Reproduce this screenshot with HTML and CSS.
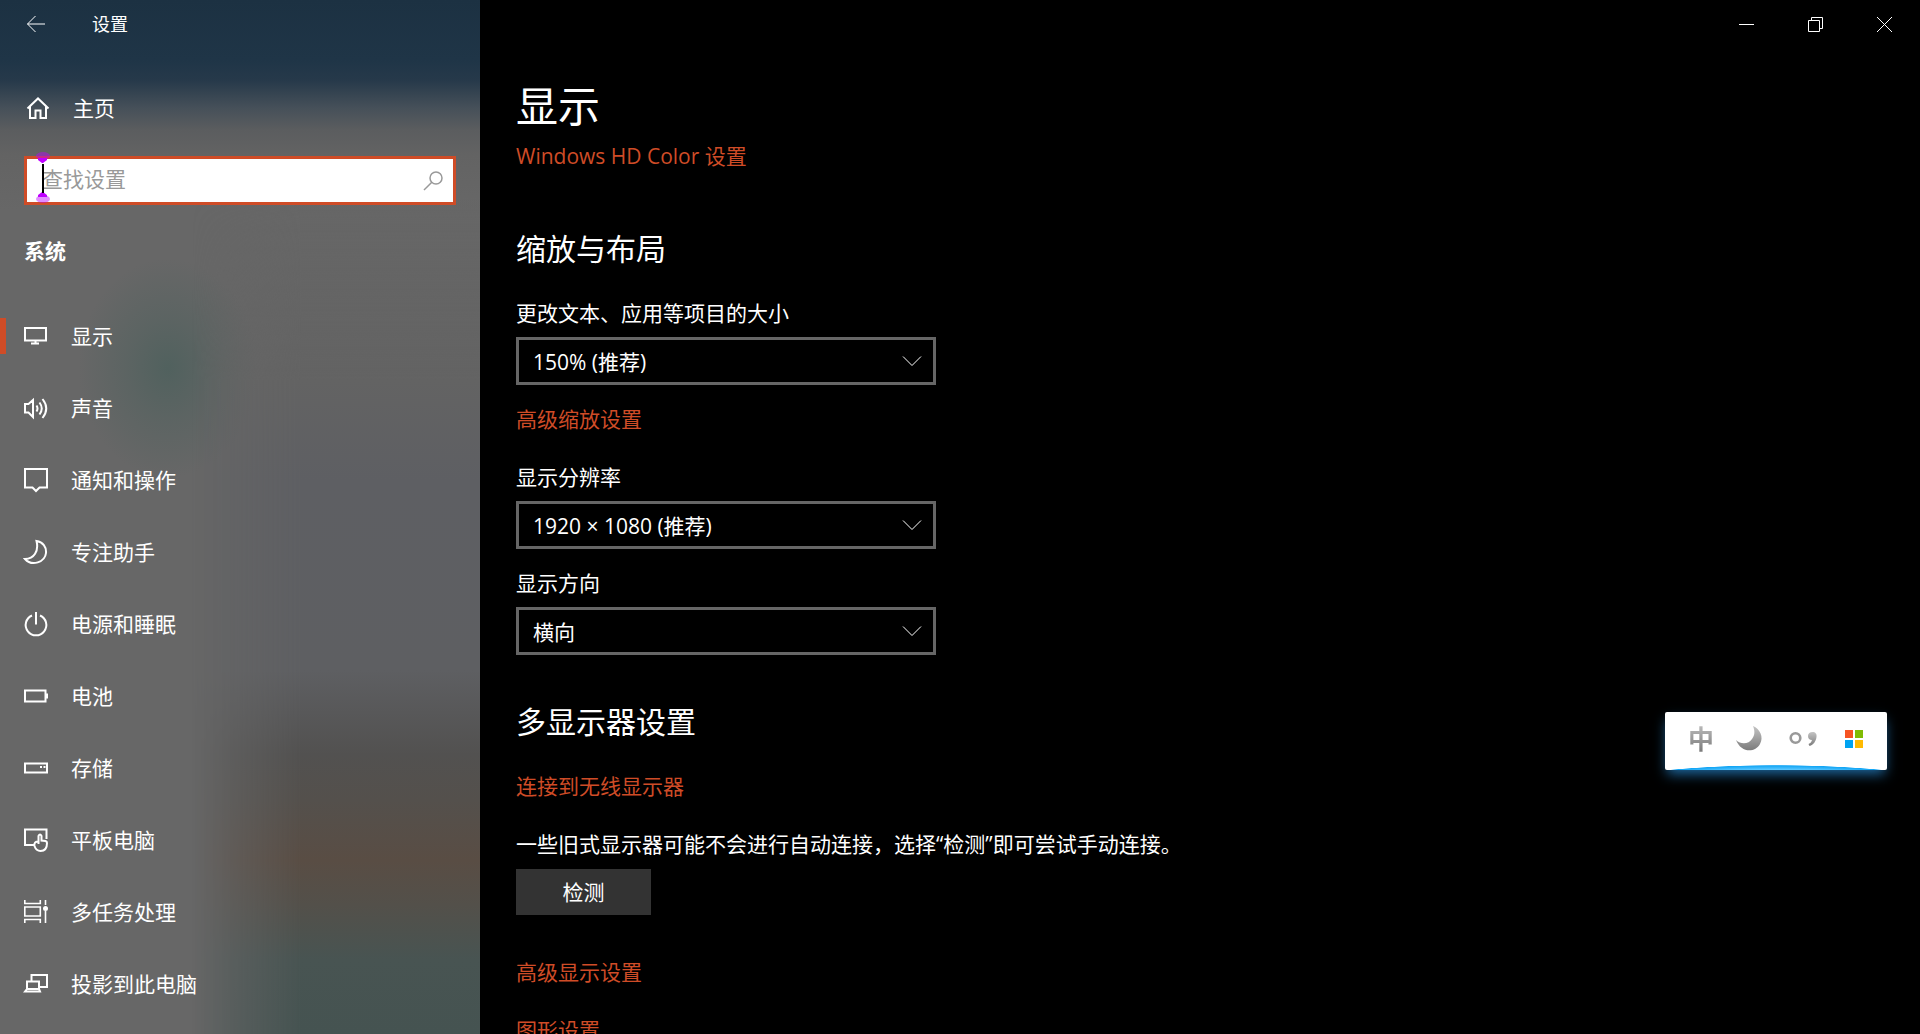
FILE: index.html
```
<!DOCTYPE html>
<html lang="zh-CN">
<head>
    <meta charset="UTF-8">
    <meta name="viewport" content="width=device-width, initial-scale=1.0">
    <title>设置</title>
    <link rel="stylesheet" href="styles.css">
</head>
<body>

<div id="window">
    <aside id="sidebar">
        <header class="titlebar">
            <button class="back" type="button" aria-label="返回">
                <svg width="20" height="18" viewBox="0 0 20 18"><path d="M19 9H1.500M9.500 1L1.500 9l8 8"/></svg>
            </button>
            <span class="title">设置</span>
        </header>

        <a class="home" href="#home">
            <svg width="24" height="24" viewBox="0 0 24 24"><path d="M1.500 12.500L12 2.500l10.500 10M4 10.500V22h5.500v-7.500h5V22H20V10.500"/></svg>
            主页
        </a>

        <form class="search">
            <input type="text" id="searchInput" placeholder="查找设置" aria-label="查找设置" autocomplete="off">
            <button type="submit" aria-label="搜索">
                <svg width="20" height="20" viewBox="0 0 20 20"><circle cx="13" cy="7" r="6"/><path d="M8.800 11.200L1 19"/></svg>
            </button>
            <!-- Text cursor indicator -->
            <svg class="caret" width="16" height="52" viewBox="0 0 16 52">
                <ellipse cx="8" cy="4" rx="7" ry="4"/>
                <ellipse cx="8" cy="47" rx="7" ry="4"/>
                <path class="tip" d="M3 6h9v2l-4 3h-1l-4-3zM3 45v-2l4-3h1l4 3v2z"/>
                <path class="bar" d="M7 12h2v29H7z"/>
            </svg>
        </form>

        <h2>系统</h2>

        <nav>
            <ul>
                <li><a class="active" href="#display">
                    <svg width="26" height="26" viewBox="0 0 26 26"><path d="M2 5h21v12.500H2zM12.500 17.500V20M8 20.500h8"/></svg>
                    显示
                </a></li>
                <li><a href="#sound">
                    <svg width="26" height="26" viewBox="0 0 26 26"><path d="M2 9h3.500L10 5v17l-4.500-4.500H2zM13.500 10.500q2 3 0 6M16.500 7.500q4.500 6 0 12M19.500 4q7.500 9.500 0 19"/></svg>
                    声音
                </a></li>
                <li><a href="#notifications">
                    <svg width="26" height="26" viewBox="0 0 26 26"><path d="M2 2h22v18.500h-7.500L13 24l-3.500-3.500H2z"/></svg>
                    通知和操作
                </a></li>
                <li><a href="#focus">
                    <svg width="26" height="26" viewBox="0 0 26 26"><path d="M13.500 2C20 3 23.500 8 23 14c-1 9-14 14-21 6C11 20 16 12 13.500 2z"/></svg>
                    专注助手
                </a></li>
                <li><a href="#power">
                    <svg width="26" height="26" viewBox="0 0 26 26"><path d="M13 1v12.500M9 4.500a10.300 10.300 0 1 0 8 0"/></svg>
                    电源和睡眠
                </a></li>
                <li><a href="#battery">
                    <svg width="26" height="26" viewBox="0 0 26 26"><path d="M2 7.500h20.500v11H2zM24 10.500v5"/></svg>
                    电池
                </a></li>
                <li><a href="#storage">
                    <svg width="26" height="26" viewBox="0 0 26 26"><path d="M2 8.500h22v9H2zM17 12h2M20.500 12h2"/></svg>
                    存储
                </a></li>
                <li><a href="#tablet">
                    <svg width="26" height="26" viewBox="0 0 26 26"><path d="M11 18H2V2.500h21.500V12M15.500 17V9q1.500-3 3 0V13.500l4 .5q1.500.5 1.500 2c0 5-2 8-6.500 8-3.500 0-5-2-6-5-.5-3 .5-4.500 4-4.500"/></svg>
                    平板电脑
                </a></li>
                <li><a href="#multitasking">
                    <svg class="thin" width="26" height="26" viewBox="0 0 26 26"><path d="M1.800 1V4.500h15.500V1M1.800 8h15.500v9H1.800zM1.800 24v-3.500h15.500V24M22.500 1V6M22.500 12v12"/><circle class="fill" cx="22.500" cy="9.500" r="2.500"/></svg>
                    多任务处理
                </a></li>
                <li><a href="#projecting">
                    <svg width="26" height="26" viewBox="0 0 26 26"><path d="M8.500 9.500V4H24V16h-7M4 10.500h12V18H4zM2 20.500L4 18h12l1 2.500z"/></svg>
                    投影到此电脑
                </a></li>
            </ul>
        </nav>
    </aside>

    <main id="content">
        <div class="controls">
            <button type="button" aria-label="最小化">
                <svg width="17" height="17" viewBox="0 0 17 17"><path d="M1 8.500h15"/></svg>
            </button>
            <button type="button" aria-label="还原">
                <svg width="17" height="17" viewBox="0 0 17 17"><path d="M1.500 4.500h11v11h-11zM4.500 4.500v-3h11v11h-3"/></svg>
            </button>
            <button type="button" aria-label="关闭">
                <svg width="17" height="17" viewBox="0 0 17 17"><path d="M1 1l15 15M16 1L1 16"/></svg>
            </button>
        </div>

        <div class="page">
            <h1>显示</h1>
            <a href="#hd-color">Windows HD Color 设置</a>

            <section class="group">
                <h2>缩放与布局</h2>
                <label for="scale">更改文本、应用等项目的大小</label>
                <div class="dropdown">
                    <select id="scale"><option>150% (推荐)</option></select>
                    <svg width="20" height="12" viewBox="0 0 20 12"><path d="M1 1.500l9 9 9-9"/></svg>
                </div>
                <a class="advanced" href="#scaling">高级缩放设置</a>

                <label for="resolution">显示分辨率</label>
                <div class="dropdown">
                    <select id="resolution"><option>1920 × 1080 (推荐)</option></select>
                    <svg width="20" height="12" viewBox="0 0 20 12"><path d="M1 1.500l9 9 9-9"/></svg>
                </div>

                <label class="close" for="orientation">显示方向</label>
                <div class="dropdown">
                    <select id="orientation"><option>横向</option></select>
                    <svg width="20" height="12" viewBox="0 0 20 12"><path d="M1 1.500l9 9 9-9"/></svg>
                </div>
            </section>

            <section class="group displays">
                <h2>多显示器设置</h2>
                <a class="spaced" href="#wireless">连接到无线显示器</a>
                <p>一些旧式显示器可能不会进行自动连接，选择“检测”即可尝试手动连接。</p>
                <button class="detect" type="button">检测</button>
                <a class="more" href="#advanced">高级显示设置</a>
                <a class="spaced" href="#graphics">图形设置</a>
            </section>
        </div>
    </main>
</div>

<!-- Floating input method bar -->
<div id="ime">
    <button class="mode" type="button">中</button>
    <button type="button" aria-label="全角/半角">
        <svg width="32" height="28" viewBox="0 0 32 28">
            <defs>
                <linearGradient id="silver" x1="0" y1="0" x2="0" y2="1">
                    <stop offset="0" stop-color="#c4c4c4"/>
                    <stop offset="1" stop-color="#7c7c7c"/>
                </linearGradient>
            </defs>
            <path fill="url(#silver)" d="M18 1C25 4 29 12 25 19 20 28 6 28 1 15c5 5 13 4 16-1 3-4 3-8 1-13z"/>
        </svg>
    </button>
    <button type="button" aria-label="中/英文标点">
        <svg width="36" height="16" viewBox="0 0 36 16">
            <circle cx="7.500" cy="7" r="4.800" fill="none" stroke="#999" stroke-width="2.600"/>
            <path fill="url(#silver)" d="M24.500 1c3 0 4.500 2 4 5-.5 4-3 8-7 9l-1-2c2-1 3-2 3.500-4-2.500 0-4-1.500-4-4s2-4 4.500-4z"/>
        </svg>
    </button>
    <button type="button" aria-label="菜单">
        <svg width="18" height="18" viewBox="0 0 18 18">
            <path fill="#f65422" d="M0 0h8v8H0z"/>
            <path fill="#80bb04" d="M10 0h8v8h-8z"/>
            <path fill="#00a3f1" d="M0 10h8v8H0z"/>
            <path fill="#ffba01" d="M10 10h8v8h-8z"/>
        </svg>
    </button>
</div>

</body>
</html>
```
FILE: styles.css
```
* {
  box-sizing: border-box;
  margin: 0;
  padding: 0;
}

html, body {
  height: 100%;
  overflow: hidden;
  background: #000;
}

body {
  color: #fff;
  font-family: "Open Sans", "Noto Sans CJK SC", sans-serif;
  font-size: 21px;
  line-height: 28px;
}

button, input, select {
  font: inherit;
  color: inherit;
  border: 0;
  background: none;
}

a {
  color: #cf4c27;
  text-decoration: none;
}

svg {
  flex: none;
  fill: none;
  stroke: currentColor;
}

#window {
  display: flex;
  height: 100%;
}

/* Sidebar */
#sidebar {
  position: relative;
  width: 25%;
  overflow: hidden;
  background:
    radial-gradient(ellipse 90px 110px at 168px 368px, rgba(66, 93, 88, 0.6), rgba(66, 93, 88, 0.3) 45%, rgba(66, 93, 88, 0)),
    linear-gradient(#1c3142, #1f3547 60px, #26394a 80px, #465059 108px, #5b5d5f 130px, #636363 155px, #676767 210px);
}

/* Wallpaper showing through the right half */
#sidebar::before {
  content: "";
  position: absolute;
  inset: 0 0 0 40%;
  background: linear-gradient(rgba(94, 95, 100, 0) 200px, #636363 380px, #5e5f63 480px, #5e5f62 670px, #525150 755px, #54504c 800px, #594d44 860px, #53504a 905px, #485452 960px, #455351);
  -webkit-mask-image: linear-gradient(to right, transparent, rgba(0, 0, 0, 0.5) 16%, #000 38%);
  mask-image: linear-gradient(to right, transparent, rgba(0, 0, 0, 0.5) 16%, #000 38%);
}

#sidebar > * {
  position: relative;
}

#sidebar a {
  color: #fff;
}

.titlebar {
  display: flex;
  align-items: center;
  height: 48px;
  font-size: 18px;
}

.back {
  display: flex;
  padding-left: 26px;
  width: 92px;
}

.home {
  display: flex;
  align-items: center;
  gap: 23px;
  height: 72px;
  margin-top: 24px;
  padding-left: 26px;
}

.home svg {
  stroke-width: 2;
}

.search {
  display: flex;
  align-items: center;
  height: 49px;
  margin: 12px 24px 0;
  border: 3px solid #cf4c27;
  background: #fff;
}

#searchInput {
  flex: 1;
  min-width: 0;
  height: 100%;
  padding: 0 0 4px 15px;
  color: #000;
  outline: none;
}

#searchInput::placeholder {
  color: #999;
  opacity: 1;
}

.search button {
  display: flex;
  padding: 0 10px;
  color: #999;
}

.search button svg {
  stroke-width: 1.5;
}

.caret {
  position: absolute;
  left: 8px;
  top: -7px;
  stroke: none;
}

.caret ellipse {
  fill: rgba(191, 0, 255, 0.45);
}

.caret .tip {
  fill: #bf00ff;
}

.caret .bar {
  fill: #000;
}

#sidebar h2 {
  margin: 32px 24px 36px;
  font-size: 21px;
  line-height: 28px;
}

#sidebar ul {
  list-style-type: none;
}

#sidebar nav a {
  position: relative;
  display: flex;
  align-items: center;
  gap: 22px;
  height: 72px;
  padding: 0 0 2px 23px;
}

#sidebar nav svg {
  stroke-width: 2;
}

#sidebar nav .thin {
  stroke-width: 1.6;
}

#sidebar .fill {
  fill: currentColor;
  stroke: none;
}

#sidebar .active::before {
  content: "";
  position: absolute;
  left: 0;
  width: 6px;
  height: 36px;
  background: #cf4c27;
}

/* Main area */
#content {
  flex: 1;
  overflow: hidden;
}

.controls {
  display: flex;
  justify-content: flex-end;
  height: 48px;
  padding-right: 1px;
}

.controls button {
  display: flex;
  align-items: center;
  justify-content: center;
  width: 69px;
}

.page {
  display: flex;
  flex-direction: column;
  align-items: flex-start;
  padding: 30px 36px 0;
}

h1 {
  margin-bottom: 8px;
  font-size: 42px;
  font-weight: 400;
  line-height: 56px;
}

.group {
  display: flex;
  flex-direction: column;
  align-items: flex-start;
  margin-top: 59px;
}

.group h2 {
  font-size: 30px;
  font-weight: 400;
  line-height: 40px;
}

.group label, .spaced, .group p {
  margin-top: 30px;
}

.group .close, .advanced {
  margin-top: 20px;
}

.dropdown {
  position: relative;
  width: 420px;
  margin-top: 10px;
}

.dropdown select {
  display: block;
  width: 100%;
  height: 48px;
  padding: 2px 0 0 14px;
  border: 3px solid #666;
  background: #000;
  appearance: none;
}

.dropdown svg {
  position: absolute;
  right: 14px;
  top: 18px;
  pointer-events: none;
}

.displays {
  margin-top: 47px;
}

.detect {
  width: 135px;
  height: 46px;
  margin-top: 11px;
  background: #333;
}

.more {
  margin-top: 43px;
}

/* Input method bar */
#ime {
  position: fixed;
  right: 33px;
  bottom: 264px;
  display: flex;
  align-items: center;
  gap: 21px;
  width: 222px;
  height: 58px;
  padding: 0 23px 4px;
  border-radius: 2px;
  background: radial-gradient(ellipse 277px 60px at 50% 113px, #5cc8ff 92%, #12a5f5 99%, #fff 100%) #fff;
  box-shadow: 0 6px 12px -2px rgba(40, 140, 215, 0.75);
}

#ime button {
  display: flex;
}

#ime svg {
  stroke: none;
}

#ime .mode {
  font-size: 26px;
  font-weight: 700;
  background: linear-gradient(#bbb, #777);
  -webkit-background-clip: text;
  background-clip: text;
  color: transparent;
}
```
